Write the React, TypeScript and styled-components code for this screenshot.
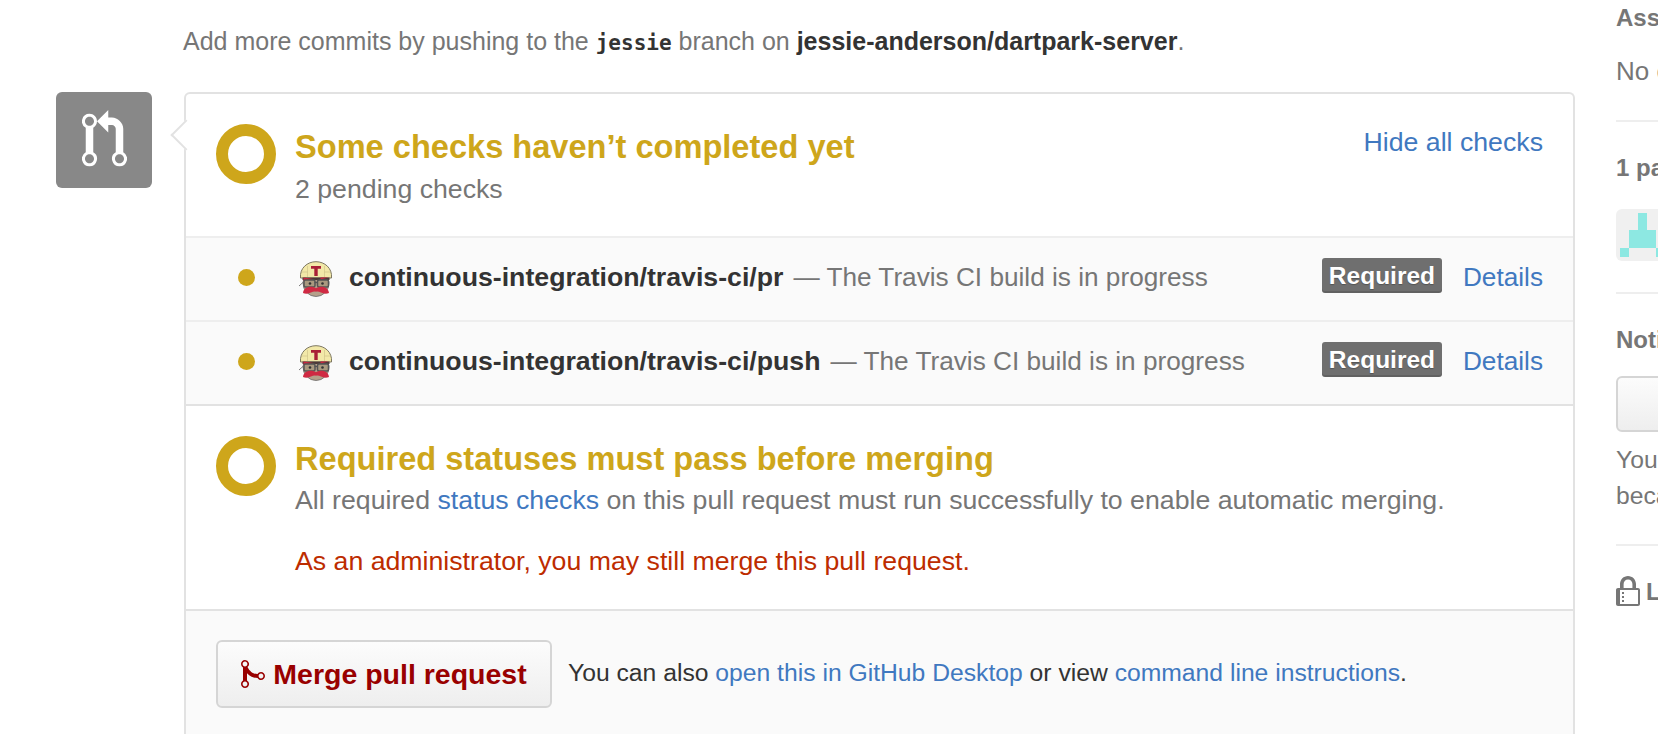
import React from "react";
import styled, { createGlobalStyle } from "styled-components";

const GlobalStyle = createGlobalStyle`
    html, body {
        margin: 0;
        height: 100%;
        overflow: hidden;
        background: #fff;
    }
    body {
        font-family: "Liberation Sans", Arial, sans-serif;
        font-size: 25px;
        color: #767676;
    }
    a {
        color: #4078c0;
        text-decoration: none;
    }
`;

const Page = styled.div`
    display: flex;
    width: 1658px;
    height: 734px;
    overflow: hidden;
`;

const Main = styled.div`
    width: 1519px;
    margin-left: 56px;
    flex-shrink: 0;
`;

const Hint = styled.p`
    margin: 0;
    height: 92px;
    padding: 26px 0 0 127px;
    box-sizing: border-box;
    line-height: 30px;
    white-space: nowrap;

    strong {
        color: #333;
    }

    code {
        font-family: "DejaVu Sans Mono", monospace;
        font-weight: 700;
        font-size: 21px;
        color: #333;
    }
`;

const Timeline = styled.div`
    display: flex;
    gap: 32px;
`;

const BranchBadge = styled.div`
    width: 96px;
    height: 96px;
    flex-shrink: 0;
    border-radius: 6px;
    background: #888;
    color: #fff;
    display: flex;
    align-items: center;
    justify-content: center;
`;

const Card = styled.div`
    position: relative;
    flex: 1;
    border: 2px solid #e2e2e2;
    border-radius: 6px 6px 0 0;
    border-bottom: none;
    height: 660px;
    font-size: 26.7px;

    &::before {
        content: "";
        position: absolute;
        left: -11px;
        top: 30px;
        width: 20px;
        height: 20px;
        background: #fff;
        border-left: 2px solid #e2e2e2;
        border-bottom: 2px solid #e2e2e2;
        transform: rotate(45deg);
    }
`;

const Section = styled.div<{ $top: number; $height: number; $divided?: boolean }>`
    display: flex;
    gap: 19px;
    padding: ${(p) => p.$top}px 30px 0 30px;
    box-sizing: border-box;
    height: ${(p) => p.$height}px;
    border-top: ${(p) => (p.$divided ? "2px solid #e2e2e2" : "none")};
`;

const Ring = styled.div`
    width: 60px;
    height: 60px;
    box-sizing: border-box;
    flex-shrink: 0;
    border-radius: 50%;
    border: 12px solid #cea61b;
`;

const StatusText = styled.div`
    flex: 1;
    min-width: 0;
`;

const Title = styled.h3<{ $lineHeight: number }>`
    margin: -1px 0 0;
    font-size: 32.6px;
    line-height: ${(p) => p.$lineHeight}px;
    font-weight: 700;
    color: #cea61b;
    white-space: nowrap;
`;

const Sub = styled.div`
    line-height: 36px;
    white-space: nowrap;
`;

const Warning = styled.div`
    margin-top: 25px;
    line-height: 36px;
    color: #bd2c00;
    white-space: nowrap;
`;

const HideLink = styled.a`
    margin-top: 3px;
`;

const CheckRow = styled.div`
    display: flex;
    align-items: center;
    height: 84px;
    box-sizing: border-box;
    padding: 0 30px 4px 52px;
    background: #fafafa;
    border-top: 2px solid #eee;
    white-space: nowrap;
`;

const Dot = styled.span`
    width: 17px;
    height: 17px;
    border-radius: 50%;
    background: #cea61b;
    flex-shrink: 0;
    margin-right: 43px;
`;

const CheckName = styled.strong`
    margin-left: 15px;
    color: #333;
`;

const CheckDesc = styled.span`
    margin-left: 10px;
    flex: 1;
    font-size: 26.2px;
`;

const RequiredTag = styled.span`
    width: 120px;
    height: 35px;
    box-sizing: border-box;
    border-radius: 3px;
    background: #6f6f6f;
    box-shadow: inset 0 -2px 0 rgba(0, 0, 0, 0.12);
    color: #fff;
    font-size: 24.5px;
    font-weight: 700;
    line-height: 35px;
    text-align: center;
    text-shadow: 0 1px 1px rgba(0, 0, 0, 0.25);
    margin: 0 21px 3px 0;
`;

const DetailsLink = styled.a`
    font-size: 26.2px;
`;

const MergeBar = styled.div`
    display: flex;
    align-items: flex-start;
    gap: 16px;
    height: 190px;
    box-sizing: border-box;
    padding: 29px 30px 0 30px;
    background: #fafafa;
    border-top: 2px solid #e2e2e2;
    color: #333;
    white-space: nowrap;
`;

const MergeButton = styled.button`
    width: 336px;
    height: 68px;
    box-sizing: border-box;
    border: 2px solid #d5d5d5;
    border-radius: 6px;
    background: linear-gradient(#fcfcfc, #eee);
    color: #900;
    font-family: inherit;
    font-size: 28.5px;
    font-weight: 700;
    display: flex;
    align-items: center;
    justify-content: center;
    gap: 8px;
    padding: 0;
`;

const MergeHint = styled.span`
    font-size: 24.7px;
    line-height: 66px;
`;

const Sidebar = styled.aside`
    margin-left: 41px;
    width: 300px;
    flex-shrink: 0;
    white-space: nowrap;
`;

const SideBlock = styled.div<{ $height: number; $pad: number; $last?: boolean }>`
    box-sizing: border-box;
    height: ${(p) => p.$height}px;
    border-bottom: ${(p) => (p.$last ? "none" : "2px solid #eee")};
    padding-top: ${(p) => p.$pad}px;
`;

const SideTitle = styled.div`
    font-size: 24px;
    line-height: 30px;
    font-weight: 700;
    color: #767676;
`;

const SideText = styled.div`
    margin-top: 20px;
    line-height: 36px;
    font-size: 26px;
`;

const Identicon = styled.svg`
    display: block;
    margin-top: 26px;
    border-radius: 6px;
`;

const SubscribeButton = styled.div`
    margin-top: 21px;
    width: 280px;
    height: 56px;
    box-sizing: border-box;
    border: 2px solid #d5d5d5;
    border-radius: 6px;
    background: linear-gradient(#fcfcfc, #eee);
`;

const SmallNote = styled.div`
    margin-top: 10px;
    font-size: 24.7px;
    line-height: 36px;
`;

const LockRow = styled.div`
    display: flex;
    align-items: center;
    gap: 6px;
    font-size: 24px;
    font-weight: 700;
    color: #767676;
`;

const PullRequestIcon = () => (
    <svg width="45" height="60" viewBox="0 0 12 16" fill="currentColor">
        <path fillRule="evenodd" d="M11 11.28V5c-.03-.78-.34-1.47-.94-2.06C9.46 2.35 8.78 2.03 8 2H7V0L4 3l3 3V4h1c.27.02.48.11.69.31.21.2.3.42.31.69v6.28A1.993 1.993 0 0 0 10 15a1.993 1.993 0 0 0 1-3.72zm-1 2.92c-.66 0-1.2-.55-1.2-1.2 0-.65.55-1.2 1.2-1.2.65 0 1.2.55 1.2 1.2 0 .65-.55 1.2-1.2 1.2zM4 3c0-1.11-.89-2-2-2a1.993 1.993 0 0 0-1 3.72v6.56A1.993 1.993 0 0 0 2 15a1.993 1.993 0 0 0 1-3.72V4.72c.59-.34 1-.98 1-1.72zm-.8 10c0 .66-.55 1.2-1.2 1.2-.65 0-1.2-.55-1.2-1.2 0-.65.55-1.2 1.2-1.2.65 0 1.2.55 1.2 1.2zM2 4.2C1.34 4.2.8 3.65.8 3c0-.65.55-1.2 1.2-1.2.65 0 1.2.55 1.2 1.2 0 .65-.55 1.2-1.2 1.2z" />
    </svg>
);

const MergeIcon = () => (
    <svg width="24" height="32" viewBox="0 0 12 16" fill="currentColor">
        <path fillRule="evenodd" d="M10 7c-.73 0-1.38.41-1.73 1.02V8C7.22 7.98 6 7.64 5.14 6.98c-.75-.58-1.5-1.61-1.89-2.44A1.993 1.993 0 0 0 2 .99C.89.99 0 1.89 0 3a2 2 0 0 0 1 1.72v6.56c-.59.35-1 .99-1 1.72 0 1.11.89 2 2 2a1.993 1.993 0 0 0 1-3.72V7.67c.67.7 1.44 1.27 2.3 1.69.86.42 2.03.63 2.97.64v-.02c.36.61 1 1.02 1.73 1.02 1.11 0 2-.89 2-2 0-1.11-.89-2-2-2zm-6.8 6c0 .66-.55 1.2-1.2 1.2-.65 0-1.2-.55-1.2-1.2 0-.65.55-1.2 1.2-1.2.65 0 1.2.55 1.2 1.2zM2 4.2C1.34 4.2.8 3.65.8 3c0-.65.55-1.2 1.2-1.2.65 0 1.2.55 1.2 1.2 0 .65-.55 1.2-1.2 1.2zm8 6c-.66 0-1.2-.55-1.2-1.2 0-.65.55-1.2 1.2-1.2.65 0 1.2.55 1.2 1.2 0 .65-.55 1.2-1.2 1.2z" />
    </svg>
);

const LockIcon = () => (
    <svg width="24" height="32" viewBox="0 0 12 16" fill="currentColor">
        <path fillRule="evenodd" d="M4 13H3v-1h1v1zm8-6v7c0 .55-.45 1-1 1H1c-.55 0-1-.45-1-1V7c0-.55.45-1 1-1h1V4c0-2.2 1.8-4 4-4s4 1.8 4 4v2h1c.55 0 1 .45 1 1zM3.8 6h4.41V4c0-1.22-.98-2.2-2.2-2.2-1.22 0-2.2.98-2.2 2.2v2H3.8zM11 7H2v7h9V7zM4 8H3v1h1V8zm0 2H3v1h1v-1z" />
    </svg>
);

const LogoSvg = styled.svg`
    flex-shrink: 0;
    margin-top: 3px;
`;

// travis mascot, small so only the big shapes matter
const TravisLogo = () => (
    <LogoSvg width="36" height="36" viewBox="0 0 35 36">
        <ellipse cx="17.5" cy="22" rx="13" ry="13.5" fill="#b5a08a" stroke="#6b6b6b" strokeWidth="0.8" />
        <path d="M2 17C1 7 9 .7 17.500 .7S34 7 33 17z" fill="#f2e8a8" stroke="#7d7760" strokeWidth="1" />
        <path d="M9 5v11M26 5v11M3.500 11h6M25.500 11h6" stroke="#d4c88e" strokeWidth="0.8" fill="none" />
        <path d="M12.500 5h10v2.800h-3.300v7.200h-3.400V7.800h-3.300z" fill="#a91f36" />
        <path d="M4 16.500h27v2.500H4z" fill="#4c3a38" />
        <path d="M5 16.500l10 1.500-10 2z" fill="#c9253f" />
        <path d="M22 16.500h8l-8 2z" fill="#c9253f" />
        <rect x="5.500" y="19" width="11" height="7" rx="1.500" fill="#a9997f" stroke="#555" strokeWidth="1.500" />
        <rect x="19" y="19" width="11" height="7" rx="1.500" fill="#a9997f" stroke="#555" strokeWidth="1.500" />
        <path d="M16 21.500h3.500" stroke="#555" strokeWidth="1.300" />
        <path d="M5.500 20.500L0.500 25" stroke="#6b6b6b" strokeWidth="0.9" />
        <circle cx="11.500" cy="22.500" r="1.300" fill="#333" />
        <circle cx="24" cy="22.500" r="1.300" fill="#333" />
        <path d="M4.500 32c2.500 1.200 5.500 .8 8-.4 2-1 3.500-1.400 5-.8 1.500-.6 3-.2 5 .8 2.500 1.200 5.500 1.600 8 .4-.5-4-3.500-6.200-7.500-6.200-2.200 0-3.800.6-5.500 1.400-1.700-.8-3.300-1.400-5.500-1.400-4 0-7 2.200-7.500 6.200z" fill="#cf2a43" />
    </LogoSvg>
);

const checks = ["continuous-integration/travis-ci/pr", "continuous-integration/travis-ci/push"];

export default function App() {
    return (
        <Page>
            <GlobalStyle />
            <Main>
                <Hint>
                    Add more commits by pushing to the <code>jessie</code> branch on <strong>jessie-anderson/dartpark-server</strong>.
                </Hint>
                <Timeline>
                    <BranchBadge>
                        <PullRequestIcon />
                    </BranchBadge>
                    <Card>
                        <Section $top={30} $height={142}>
                            <Ring />
                            <StatusText>
                                <Title $lineHeight={48}>Some checks haven’t completed yet</Title>
                                <Sub>2 pending checks</Sub>
                            </StatusText>
                            <HideLink href="#hide">Hide all checks</HideLink>
                        </Section>
                        {checks.map((name) => (
                            <CheckRow key={name}>
                                <Dot />
                                <TravisLogo />
                                <CheckName>{name}</CheckName>
                                <CheckDesc>— The Travis CI build is in progress</CheckDesc>
                                <RequiredTag>Required</RequiredTag>
                                <DetailsLink href="#details">Details</DetailsLink>
                            </CheckRow>
                        ))}
                        <Section $top={30} $height={205} $divided>
                            <Ring />
                            <StatusText>
                                <Title $lineHeight={47}>Required statuses must pass before merging</Title>
                                <Sub>
                                    All required <a href="#status">status checks</a> on this pull request must run successfully to enable automatic merging.
                                </Sub>
                                <Warning>As an administrator, you may still merge this pull request.</Warning>
                            </StatusText>
                        </Section>
                        <MergeBar>
                            <MergeButton>
                                <MergeIcon />
                                Merge pull request
                            </MergeButton>
                            <MergeHint>
                                You can also <a href="#desktop">open this in GitHub Desktop</a> or view <a href="#cli">command line instructions</a>.
                            </MergeHint>
                        </MergeBar>
                    </Card>
                </Timeline>
            </Main>
            <Sidebar>
                <SideBlock $height={122} $pad={3}>
                    <SideTitle>Assignees</SideTitle>
                    <SideText>No one assigned</SideText>
                </SideBlock>
                <SideBlock $height={172} $pad={31}>
                    <SideTitle>1 participant</SideTitle>
                    <Identicon width="52" height="52" viewBox="0 0 52 52">
                        <rect width="52" height="52" fill="#f0f0f0" />
                        <rect x="22" y="4" width="9" height="17" fill="#8de8e2" />
                        <rect x="13" y="21" width="27" height="18" fill="#8de8e2" />
                        <rect x="4" y="39" width="9" height="9" fill="#8de8e2" />
                        <rect x="40" y="39" width="9" height="9" fill="#8de8e2" />
                    </Identicon>
                </SideBlock>
                <SideBlock $height={252} $pad={31}>
                    <SideTitle>Notifications</SideTitle>
                    <SubscribeButton />
                    <SmallNote>
                        You’re not receiving
                        <br />
                        because you aren’t watching
                    </SmallNote>
                </SideBlock>
                <SideBlock $height={80} $pad={30} $last>
                    <LockRow>
                        <LockIcon />
                        Lock conversation
                    </LockRow>
                </SideBlock>
            </Sidebar>
        </Page>
    );
}
